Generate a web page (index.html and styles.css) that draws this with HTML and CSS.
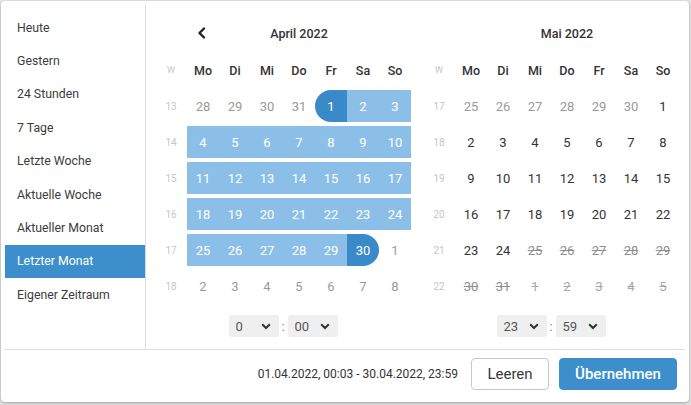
FILE: index.html
```html
<!DOCTYPE html>
<html lang="de">
<head>
<meta charset="utf-8">
<title>Zeitraum</title>
<link rel="stylesheet" href="styles.css">
</head>
<body>
<div class="popup">
  <div class="main">
    <ul class="sidebar">
      <li class="item">Heute</li>
      <li class="item">Gestern</li>
      <li class="item">24 Stunden</li>
      <li class="item">7 Tage</li>
      <li class="item">Letzte Woche</li>
      <li class="item">Aktuelle Woche</li>
      <li class="item">Aktueller Monat</li>
      <li class="item active">Letzter Monat</li>
      <li class="item">Eigener Zeitraum</li>
    </ul>
    <div class="cals">
      <div class="cal">
        <div class="head">
          <span class="arrow"><svg width="9" height="12" viewBox="0 0 9 12"><polyline points="7,1.5 2.5,6 7,10.5" fill="none" stroke="#222" stroke-width="2.4" stroke-linecap="round" stroke-linejoin="round"/></svg></span>
          <span class="title">April 2022</span>
          <span class="spacer"></span>
        </div>
        <div class="grid">
          <span class="wk wkh">W</span><span class="wd">Mo</span><span class="wd">Di</span><span class="wd">Mi</span><span class="wd">Do</span><span class="wd">Fr</span><span class="wd">Sa</span><span class="wd">So</span>
          <span class="wk">13</span><span class="d off">28</span><span class="d off">29</span><span class="d off">30</span><span class="d off">31</span><span class="d start">1</span><span class="d in">2</span><span class="d in">3</span>
          <span class="wk">14</span><span class="d in">4</span><span class="d in">5</span><span class="d in">6</span><span class="d in">7</span><span class="d in">8</span><span class="d in">9</span><span class="d in">10</span>
          <span class="wk">15</span><span class="d in">11</span><span class="d in">12</span><span class="d in">13</span><span class="d in">14</span><span class="d in">15</span><span class="d in">16</span><span class="d in">17</span>
          <span class="wk">16</span><span class="d in">18</span><span class="d in">19</span><span class="d in">20</span><span class="d in">21</span><span class="d in">22</span><span class="d in">23</span><span class="d in">24</span>
          <span class="wk">17</span><span class="d in">25</span><span class="d in">26</span><span class="d in">27</span><span class="d in">28</span><span class="d in">29</span><span class="d end">30</span><span class="d off">1</span>
          <span class="wk">18</span><span class="d off">2</span><span class="d off">3</span><span class="d off">4</span><span class="d off">5</span><span class="d off">6</span><span class="d off">7</span><span class="d off">8</span>
        </div>
        <div class="time">
          <div class="sel"><span>0</span><svg width="10" height="7" viewBox="0 0 10 7"><polyline points="1.2,1.2 5,5 8.8,1.2" fill="none" stroke="#333" stroke-width="2"/></svg></div>
          <span class="colon">:</span>
          <div class="sel"><span>00</span><svg width="10" height="7" viewBox="0 0 10 7"><polyline points="1.2,1.2 5,5 8.8,1.2" fill="none" stroke="#333" stroke-width="2"/></svg></div>
        </div>
      </div>
      <div class="cal">
        <div class="head">
          <span class="arrow"></span>
          <span class="title">Mai 2022</span>
          <span class="spacer"></span>
        </div>
        <div class="grid">
          <span class="wk wkh">W</span><span class="wd">Mo</span><span class="wd">Di</span><span class="wd">Mi</span><span class="wd">Do</span><span class="wd">Fr</span><span class="wd">Sa</span><span class="wd">So</span>
          <span class="wk">17</span><span class="d off">25</span><span class="d off">26</span><span class="d off">27</span><span class="d off">28</span><span class="d off">29</span><span class="d off">30</span><span class="d">1</span>
          <span class="wk">18</span><span class="d">2</span><span class="d">3</span><span class="d">4</span><span class="d">5</span><span class="d">6</span><span class="d">7</span><span class="d">8</span>
          <span class="wk">19</span><span class="d">9</span><span class="d">10</span><span class="d">11</span><span class="d">12</span><span class="d">13</span><span class="d">14</span><span class="d">15</span>
          <span class="wk">20</span><span class="d">16</span><span class="d">17</span><span class="d">18</span><span class="d">19</span><span class="d">20</span><span class="d">21</span><span class="d">22</span>
          <span class="wk">21</span><span class="d">23</span><span class="d">24</span><span class="d dis">25</span><span class="d dis">26</span><span class="d dis">27</span><span class="d dis">28</span><span class="d dis">29</span>
          <span class="wk">22</span><span class="d dis">30</span><span class="d dis">31</span><span class="d dis off2">1</span><span class="d dis off2">2</span><span class="d dis off2">3</span><span class="d dis off2">4</span><span class="d dis off2">5</span>
        </div>
        <div class="time">
          <div class="sel"><span>23</span><svg width="10" height="7" viewBox="0 0 10 7"><polyline points="1.2,1.2 5,5 8.8,1.2" fill="none" stroke="#333" stroke-width="2"/></svg></div>
          <span class="colon">:</span>
          <div class="sel"><span>59</span><svg width="10" height="7" viewBox="0 0 10 7"><polyline points="1.2,1.2 5,5 8.8,1.2" fill="none" stroke="#333" stroke-width="2"/></svg></div>
        </div>
      </div>
    </div>
  </div>
  <div class="footer">
    <span class="range">01.04.2022, 00:03 - 30.04.2022, 23:59</span>
    <button class="btn clear">Leeren</button>
    <button class="btn apply">Übernehmen</button>
  </div>
</div>
</body>
</html>
```

FILE: styles.css
```css
* { box-sizing: border-box; margin: 0; padding: 0; }
html, body { width: 691px; height: 405px; overflow: hidden; }
body {
  background: #e4e4e4;
  font-family: Roboto, "Liberation Sans", Arial, sans-serif;
  color: #333;
}
.popup {
  margin: 1px 0 0 1px;
  width: 688px;
  height: 401px;
  background: #fff;
  border-radius: 4px;
  padding: 4px;
  box-shadow: 0 1px 3px rgba(0, 0, 0, 0.3);
  display: flex;
  flex-direction: column;
}
.main {
  display: flex;
  height: 345px;
  border-bottom: 1px solid #dcdcdc;
}
.sidebar {
  list-style: none;
  width: 141px;
  border-right: 1px solid #dcdcdc;
  padding-top: 6px;
}
.item {
  height: 33.4px;
  display: flex;
  align-items: center;
  padding-left: 12px;
  font-size: 12.3px;
  color: #3c3c3c;
}
.item.active {
  background: #3c8fcb;
  color: #fff;
}
.cals {
  display: flex;
  gap: 12px;
  padding: 11px 6px 0 9px;
}
.cal { width: 256px; }
.head {
  display: flex;
  align-items: center;
  height: 34px;
  padding-left: 32px;
}
.arrow, .spacer {
  width: 28px;
  display: flex;
  justify-content: center;
  align-items: center;
}
.title {
  flex: 1;
  text-align: center;
  font-weight: 500;
  font-size: 12.5px;
  color: #333;
}
.grid {
  display: grid;
  grid-template-columns: repeat(8, 32px);
  margin-top: 2px;
}
.wd {
  height: 36px;
  display: flex;
  align-items: center;
  justify-content: center;
  font-weight: 500;
  font-size: 12.5px;
  color: #333;
}
.wk {
  height: 32px;
  margin: 2px 0;
  display: flex;
  align-items: center;
  justify-content: center;
  font-size: 10px;
  color: #c6c6c6;
}
.wkh { height: 36px; margin: 0; font-size: 9px; }
.d {
  height: 32px;
  margin: 2px 0;
  display: flex;
  align-items: center;
  justify-content: center;
  font-size: 13px;
  color: #333;
}
.d.off { color: #9a9a9a; }
.d.in { background: #8bbfe8; color: #fff; }
.d.start { background: #3a89c8; color: #fff; border-radius: 16px 0 0 16px; }
.d.end { background: #3a89c8; color: #fff; border-radius: 0 16px 16px 0; }
.d.dis { color: #8f8f8f; text-decoration: line-through; }
.d.off2 { color: #a8a8a8; }
.time {
  display: flex;
  justify-content: center;
  align-items: center;
  margin-top: 11px;
}
.sel {
  width: 50px;
  height: 22px;
  background: #efefef;
  border-radius: 2px;
  display: flex;
  align-items: center;
  justify-content: space-between;
  padding: 0 8px 0 7px;
  font-size: 13px;
  color: #555;
}
.colon {
  width: 9px;
  text-align: center;
  font-size: 13px;
  color: #888;
}
.footer {
  flex: 1;
  display: flex;
  align-items: center;
  justify-content: flex-end;
  padding-right: 8px;
}
.range {
  font-size: 12px;
  color: #333;
  margin-right: 13px;
}
.btn {
  height: 32px;
  border-radius: 4px;
  font-family: Roboto, "Liberation Sans", Arial, sans-serif;
  font-size: 15px;
}
.clear {
  width: 78px;
  background: #fff;
  border: 1px solid #c8c8c8;
  color: #3a3a3a;
  margin-right: 10px;
}
.apply {
  width: 118px;
  background: #3d8fcc;
  border: 1px solid #3d8fcc;
  color: #fff;
  font-weight: 500;
}
```
